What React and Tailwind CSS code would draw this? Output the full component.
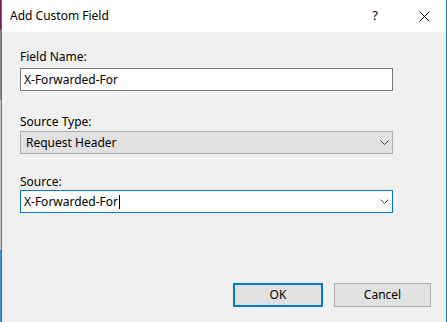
export default function App() {
  const font = { fontFamily: '"Segoe UI", "Noto Sans", "Open Sans", sans-serif' };

  return (
    <div className="flex h-[322px] w-[447px] overflow-hidden text-[12px] text-black" style={font}>
      {/* bit of the window behind */}
      <div className="flex w-[1px] flex-col">
        <div className="h-[30px] bg-[#7a1f4f]" />
        <div className="h-[70px] bg-[#8a8a8a]" />
        <div className="h-[150px] bg-[#c9c9c9]" />
        <div className="h-[72px] bg-[#3a8ee0]" />
      </div>

      <div className="flex w-[446px] flex-col border-x border-[#1883d7]">
        {/* title bar */}
        <div className="flex h-[32px] items-center bg-white">
          <span className="pl-[8px] pb-[1px]">Add Custom Field</span>
          <span className="ml-auto mr-[38px] text-[13px]">?</span>
          <button className="mr-[14px] flex h-[16px] w-[16px] items-center justify-center">
            <svg width="11" height="11" viewBox="0 0 11 11">
              <path d="M0.5 0.5 L10.5 10.5 M10.5 0.5 L0.5 10.5" stroke="#000" strokeWidth="1" />
            </svg>
          </button>
        </div>

        {/* body */}
        <div className="flex flex-1 flex-col bg-[#f0f0f0] pl-[18px] pt-[17px]">
          <label className="h-[16px] leading-[16px]">Field Name:</label>
          <div className="mt-[3px] flex h-[23px] w-[373px] items-center border border-[#7a7a7a] bg-white pl-[3px]">
            X-Forwarded-For
          </div>

          <label className="mt-[23px] h-[16px] leading-[16px]">Source Type:</label>
          <div className="mt-[1px] flex h-[23px] w-[373px] items-center border border-[#adadad] bg-[#e1e1e1] pl-[5px]">
            <span>Request Header</span>
            <Chevron />
          </div>

          <label className="mt-[20px] h-[16px] leading-[16px]">Source:</label>
          <div className="flex h-[23px] w-[373px] items-center border border-[#0078d7] bg-white pl-[3px]">
            <span>X-Forwarded-For</span>
            <span className="ml-[1px] h-[14px] w-[1px] bg-black" />
            <Chevron />
          </div>

          <div className="mt-[70px] flex gap-[11px] pl-[213px]">
            <button className="flex h-[24px] w-[90px] items-center justify-center border-2 border-[#0078d7] bg-[#e1e1e1]">
              OK
            </button>
            <button className="flex h-[24px] w-[97px] items-center justify-center border border-[#adadad] bg-[#e1e1e1]">
              Cancel
            </button>
          </div>
        </div>
      </div>
    </div>
  );
}

function Chevron() {
  return (
    <svg className="ml-auto mr-[3px]" width="9" height="6" viewBox="0 0 9 6">
      <path d="M0.5 0.5 L4.5 4.5 L8.5 0.5" fill="none" stroke="#444" strokeWidth="1" />
    </svg>
  );
}
